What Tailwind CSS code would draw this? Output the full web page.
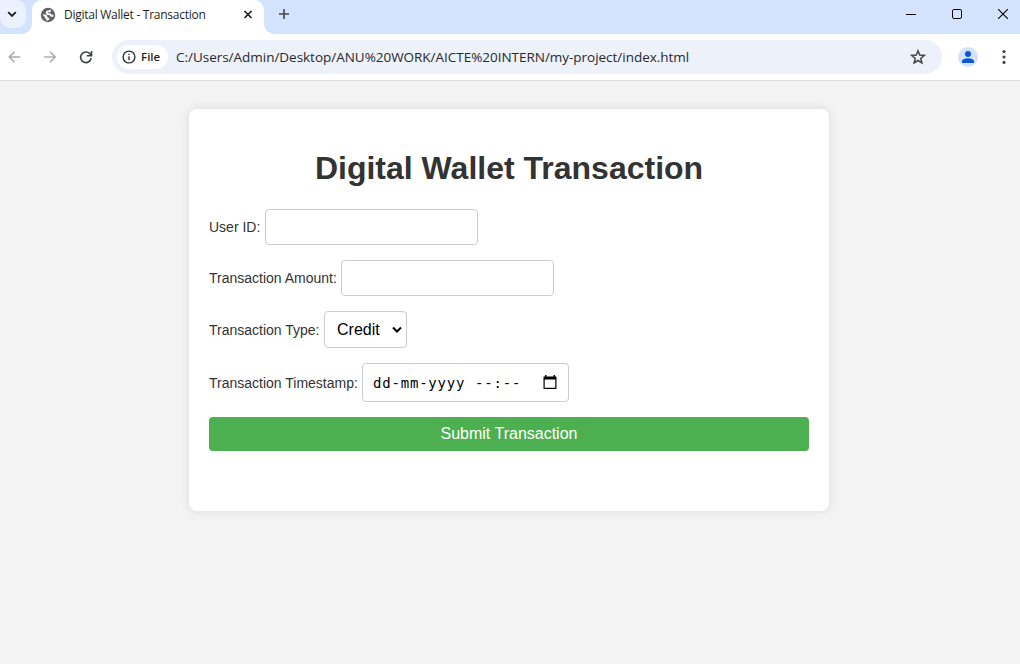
<!DOCTYPE html>
<html lang="en">
<head>
<meta charset="utf-8">
<title>Digital Wallet - Transaction</title>
<script src="https://cdn.jsdelivr.net/npm/@tailwindcss/browser@4"></script>
</head>
<body class="w-[1020px] h-[664px] overflow-hidden bg-[#f3f3f3] font-['Liberation_Sans',sans-serif] flex flex-col">
<header class="h-[34px] flex shrink-0 bg-white">
  <div class="w-8 bg-[#d3e3fd] rounded-br-[10px]">
    <div class="w-[26px] h-7 bg-[#ebf2fe] rounded-r-[10px] rounded-bl-[10px] flex items-center">
      <svg class="ml-[7px]" width="10" height="10" viewBox="0 0 10 10" fill="none" stroke="#1f1f1f" stroke-width="1.9"><path d="M1.2 3.2 5 7l3.8-3.8"/></svg>
    </div>
  </div>
  <div class="w-[232px] bg-[#d3e3fd]">
    <div class="h-full bg-white rounded-t-[10px] flex items-center pb-[5px]">
      <svg class="ml-[8px] shrink-0" width="16" height="16" viewBox="0 0 16 16"><circle cx="8" cy="8" r="7.2" fill="#5f6368"/><path fill="none" stroke="#fff" stroke-width="1.900" stroke-linejoin="round" d="M10.600 3.300 9.400 4.400H7.600L6.600 5.900 7.600 7.100h2.300l1.200 1.700h2.300"/><path fill="#fff" d="M2.300 7.600h3.200l1.900 1.500v1.300l2 .9-.6 1.700-1.600.8-1-.2.200-1.500-1.600-.9v-1.200z"/></svg>
      <span class="ml-[8px] w-[172px] whitespace-nowrap font-['Open_Sans',sans-serif] text-[12px] tracking-[-0.26px] leading-4 text-[#1f1f1f]">Digital Wallet - Transaction</span>
      <svg class="ml-[7px]" width="10" height="10" viewBox="0 0 10 10" fill="none" stroke="#1f1f1f" stroke-width="1.7"><path d="m1.500 1 7 7m0-7-7 7"/></svg>
    </div>
  </div>
  <div class="flex-1 bg-[#d3e3fd] rounded-bl-[10px] flex items-center pb-[6px]">
    <svg class="ml-[14px]" width="12" height="12" viewBox="0 0 12 12" stroke="#444746" stroke-width="1.600"><path d="M6 1v10M1 6h10"/></svg>
    <svg class="ml-auto" width="10" height="10" viewBox="0 0 10 10" stroke="#000" stroke-width="1"><path d="M0 5.500h10"/></svg>
    <svg class="ml-9" width="10" height="10" viewBox="0 0 10 10" fill="none" stroke="#000"><rect x=".5" y=".5" width="9" height="9" rx="1.400"/></svg>
    <svg class="ml-9 mr-3" width="10" height="10" viewBox="0 0 10 10" stroke="#000" stroke-width="1.100"><path d="m0 0 10 10M10 0 0 10"/></svg>
  </div>
</header>
<nav class="h-[47px] shrink-0 bg-white border-b border-[#dedfe1] flex items-center">
  <svg class="ml-[8px] shrink-0" width="13" height="12" viewBox="0 0 13 12" fill="none" stroke="#adadad" stroke-width="1.600"><path d="M12.300 6H1.500M6.500.8 1.300 6l5.200 5.200"/></svg>
  <svg class="ml-[23px] shrink-0" width="13" height="12" viewBox="0 0 13 12" fill="none" stroke="#adadad" stroke-width="1.600"><path d="M.2 6H11M6 .8 11.200 6 6 11.200"/></svg>
  <svg class="ml-[22px] shrink-0" width="14" height="14" viewBox="0 0 14 14" fill="none" stroke="#3c4043" stroke-width="1.600"><path d="M12.200 8A5.300 5.300 0 1 1 10.600 3.400L12 5"/><path d="M12.500 1v4.700H7.800" /></svg>
  <div class="ml-[19px] w-[830px] h-[34px] rounded-full bg-[#edf1fa] flex items-center">
    <div class="ml-[5px] w-[51px] h-6 rounded-full bg-white flex items-center shrink-0">
      <svg class="ml-[5px] shrink-0" width="14" height="14" viewBox="0 0 14 14" fill="none" stroke="#303134" stroke-width="1.400"><circle cx="7" cy="7" r="5.900"/><path d="M7 6.300v4M7 3.700v1.400"/></svg>
      <span class="ml-[5px] font-['Open_Sans',sans-serif] font-semibold text-[11.500px] leading-4 text-[#1f1f1f]">File</span>
    </div>
    <span class="ml-2 whitespace-nowrap font-['Open_Sans',sans-serif] text-[13.500px] tracking-[-0.025px] leading-5 text-[#28292b]">C:/Users/Admin/Desktop/ANU%20WORK/AICTE%20INTERN/my-project/index.html</span>
    <svg class="ml-auto mr-[16px] shrink-0" width="16" height="16" viewBox="0 0 16 16" fill="none" stroke="#444746" stroke-width="1.500"><path d="m8 1.800 1.700 4.200 4.600.4-3.500 3 1.100 4.500L8 11.500l-3.900 2.400 1.100-4.500-3.500-3 4.600-.4z"/></svg>
  </div>
  <svg class="ml-4 shrink-0" width="20" height="20" viewBox="0 0 20 20"><circle cx="10" cy="10" r="10" fill="#d3e3fd"/><circle cx="10" cy="7" r="3" fill="#0b57d0"/><path fill="#0b57d0" d="M4 16v-1.700c0-2 3.300-3 6-3s6 1 6 3V16z"/></svg>
  <svg class="ml-[24px] shrink-0" width="4" height="14" viewBox="0 0 4 14" fill="#444746"><circle cx="2" cy="1.600" r="1.600"/><circle cx="2" cy="7" r="1.600"/><circle cx="2" cy="12.400" r="1.600"/></svg>
</nav>
<main class="mt-7 ml-[189px] w-[640px] h-[402px] shrink-0 bg-white rounded-lg shadow-[0_0_10px_rgba(0,0,0,0.1)] px-5 pt-[41px] flex flex-col text-[14px] text-[#333]">
  <h1 class="text-center text-[32px] font-bold leading-[37px] whitespace-nowrap">Digital Wallet Transaction</h1>
  <div class="mt-[22px] h-9 flex items-center"><label class="w-14 whitespace-nowrap">User ID:</label><input class="w-[213px] h-9 border border-[#ccc] rounded bg-white"></div>
  <div class="mt-[15px] h-9 flex items-center"><label class="w-[132px] whitespace-nowrap">Transaction Amount:</label><input class="w-[213px] h-9 border border-[#ccc] rounded bg-white"></div>
  <div class="mt-[15px] h-[37px] flex items-center"><label class="w-[115px] pt-px whitespace-nowrap">Transaction Type:</label>
    <div class="w-[83px] h-[37px] border border-[#ccc] rounded flex items-center pl-3 text-base text-black"><span class="w-[55px]">Credit</span><svg width="10" height="8" viewBox="0 0 10 8" fill="none" stroke="#000" stroke-width="2"><path d="m1 1.500 4 4 4-4"/></svg></div>
  </div>
  <div class="mt-[15px] h-[39px] flex items-center"><label class="w-[153px] pt-0.5 whitespace-nowrap">Transaction Timestamp:</label>
    <div class="w-[207px] h-[39px] border border-[#ccc] rounded flex items-center pl-[10px] text-black font-['DejaVu_Sans_Mono',monospace] text-[14px]"><span class="w-[102px] pt-0.5 tracking-[0.8px] whitespace-nowrap">dd-mm-yyyy</span><span class="w-[68px] pt-0.5 tracking-[0.8px] whitespace-nowrap">--:--</span><svg class="-mt-0.5" width="14" height="14" viewBox="0 0 14 14"><path fill="#000" fill-rule="evenodd" d="M2 0h1.500v1.500h7V0H12v1.500h1a.5.5 0 0 1 .5.5v11.500a.5.500 0 0 1-.5.5H1a.5.500 0 0 1-.5-.5V2a.5.500 0 0 1 .5-.5h1zM1.700 4.500v8.300h10.600V4.500z"/></svg></div>
  </div>
  <button class="mt-[15px] h-[34px] bg-[#4caf50] rounded text-white text-base">Submit Transaction</button>
</main>
</body>
</html>
